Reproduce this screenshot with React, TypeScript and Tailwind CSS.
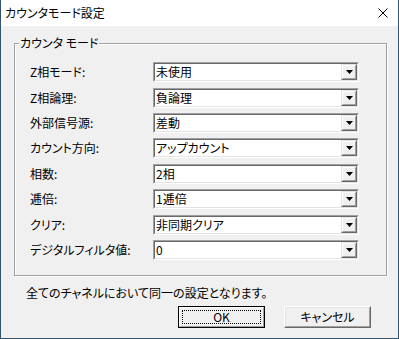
import React from "react";

const rows = [
  { label: "Z相モード:", value: "未使用", h: "h-[26px]" },
  { label: "Z相論理:", value: "負論理", h: "h-[25px]" },
  { label: "外部信号源:", value: "差動", h: "h-[25px]" },
  { label: "カウント方向:", value: "アップカウント", h: "h-[26px]" },
  { label: "相数:", value: "2相", h: "h-[25px]" },
  { label: "逓倍:", value: "1逓倍", h: "h-[26px]" },
  { label: "クリア:", value: "非同期クリア", h: "h-[25px]" },
  { label: "デジタルフィルタ値:", value: "0", h: "h-[20px]" },
];

const Combo = ({ value }: { value: string }) => (
  <div className="w-[206px] h-[20px] border border-t-[#a0a0a0] border-l-[#a0a0a0] border-r-white border-b-white">
    <div className="h-full flex items-center bg-white border border-t-[#696969] border-l-[#696969] border-r-[#e3e3e3] border-b-[#e3e3e3]">
      <span className="flex-1 pl-[1px] leading-[14px]">{value}</span>
      <div className="w-[16px] h-full border border-t-[#e3e3e3] border-l-[#e3e3e3] border-r-[#696969] border-b-[#696969]">
        <div className="h-full flex items-center justify-center bg-[#f0f0f0] border border-t-white border-l-white border-r-[#a0a0a0] border-b-[#a0a0a0]">
          <svg width="7" height="4" viewBox="0 0 7 4">
            <polygon points="0,0 7,0 3.5,4" fill="#000" />
          </svg>
        </div>
      </div>
    </div>
  </div>
);

export default function App() {
  return (
    <div className="w-[399px] h-[339px] flex flex-col border-x border-b border-[#33546c] text-[12px] text-black font-['Noto_Sans_CJK_JP','Noto_Sans',sans-serif] [font-feature-settings:'palt']">
      <div className="h-[26px] bg-white flex items-center justify-between pl-[4px] pr-[10px]">
        <span className="leading-[14px]">カウンタモード設定</span>
        <svg width="10" height="10" viewBox="0 0 10 10">
          <path d="M0.5 0.5 L9.5 9.5 M9.5 0.5 L0.5 9.5" stroke="#000" strokeWidth="1" />
        </svg>
      </div>
      <div className="flex-1 bg-[#f0f0f0] flex flex-col">
        <div className="relative mt-[17px] ml-[13px] w-[373px] h-[233px] border border-[#a0a0a0] shadow-[inset_1px_1px_0_#fff,1px_1px_0_#fff]">
          <span className="absolute -top-[8px] left-[4px] px-[1px] bg-[#f0f0f0] leading-[14px]">カウンタ モード</span>
          <div className="flex flex-col pt-[18px] pl-[15px]">
            {rows.map((r) => (
              <div key={r.label} className={r.h}>
                <div className="flex items-center h-[20px]">
                  <span className="w-[123px] leading-[14px]">{r.label}</span>
                  <Combo value={r.value} />
                </div>
              </div>
            ))}
          </div>
        </div>
        <p className="mt-[10px] ml-[25px] leading-[14px]">全てのチャネルにおいて同一の設定となります。</p>
        <div className="flex gap-[19px] mt-[6px] ml-[177px]">
          <div className="w-[87px] h-[22px] border border-black">
            <div className="h-full p-[2px] border border-t-white border-l-white border-r-[#a0a0a0] border-b-[#a0a0a0] bg-[#f0f0f0]">
              <div className="h-full flex items-center justify-center border border-dotted border-black leading-[14px]">OK</div>
            </div>
          </div>
          <div className="w-[87px] h-[22px] border border-t-white border-l-white border-r-[#696969] border-b-[#696969]">
            <div className="h-full flex items-center justify-center bg-[#f0f0f0] border border-t-[#e3e3e3] border-l-[#e3e3e3] border-r-[#a0a0a0] border-b-[#a0a0a0] leading-[14px]">
              キャンセル
            </div>
          </div>
        </div>
      </div>
    </div>
  );
}
